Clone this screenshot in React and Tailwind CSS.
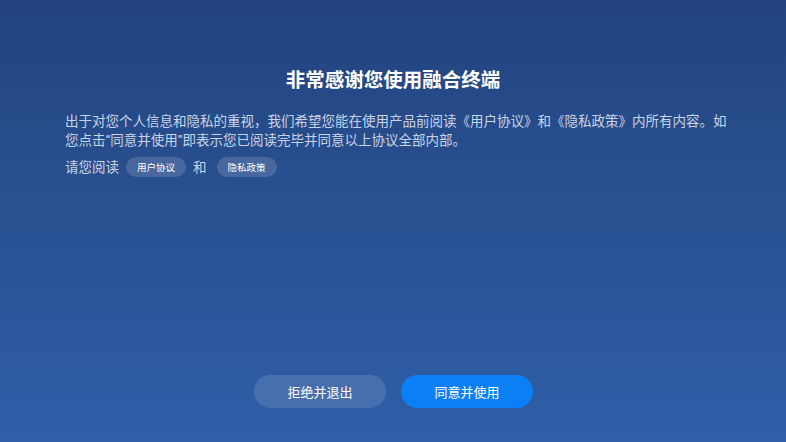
import React from 'react';

const font = { fontFamily: '"Noto Sans CJK SC", "Noto Sans", sans-serif' };
// latin font first so the quote marks stay narrow like in the reference
const bodyFont = { fontFamily: 'Roboto, "Noto Sans CJK SC", sans-serif' };

const Chip = ({ children }) => (
  <span className="inline-flex items-center justify-center h-[20px] w-[60px] rounded-full bg-white/15 text-[9.5px] text-white">
    {children}
  </span>
);

export default function App() {
  return (
    <div
      className="w-[786px] h-[442px] flex flex-col bg-gradient-to-b from-[#23447e] to-[#2f5fa8] overflow-hidden"
      style={font}
    >
      <h1 className="mt-[64px] text-center text-[19.5px] leading-[30px] font-bold text-white">
        非常感谢您使用融合终端
      </h1>

      <div className="mt-[18px] pl-[65px] pr-[56px]">
        <p className="text-[13.5px] leading-[18.5px] text-[#c9d4e8]" style={bodyFont}>
          出于对您个人信息和隐私的重视，我们希望您能在使用产品前阅读《用户协议》和《隐私政策》内所有内容。如您点击“同意并使用”即表示您已阅读完毕并同意以上协议全部内部。
        </p>
        <div className="mt-[6px] flex items-center text-[13.5px] text-[#c9d4e8]">
          <span>请您阅读</span>
          <span className="ml-[7px]"><Chip>用户协议</Chip></span>
          <span className="ml-[7px]">和</span>
          <span className="ml-[10px]"><Chip>隐私政策</Chip></span>
        </div>
      </div>

      <div className="flex-1" />

      <div className="mb-[34px] flex justify-center gap-[15px] pl-[1px]">
        <button className="h-[33px] w-[132px] rounded-full bg-white/12 text-[13px] text-white">
          拒绝并退出
        </button>
        <button className="h-[33px] w-[132px] rounded-full bg-[#0a7ff6] text-[13px] text-white">
          同意并使用
        </button>
      </div>
    </div>
  );
}
